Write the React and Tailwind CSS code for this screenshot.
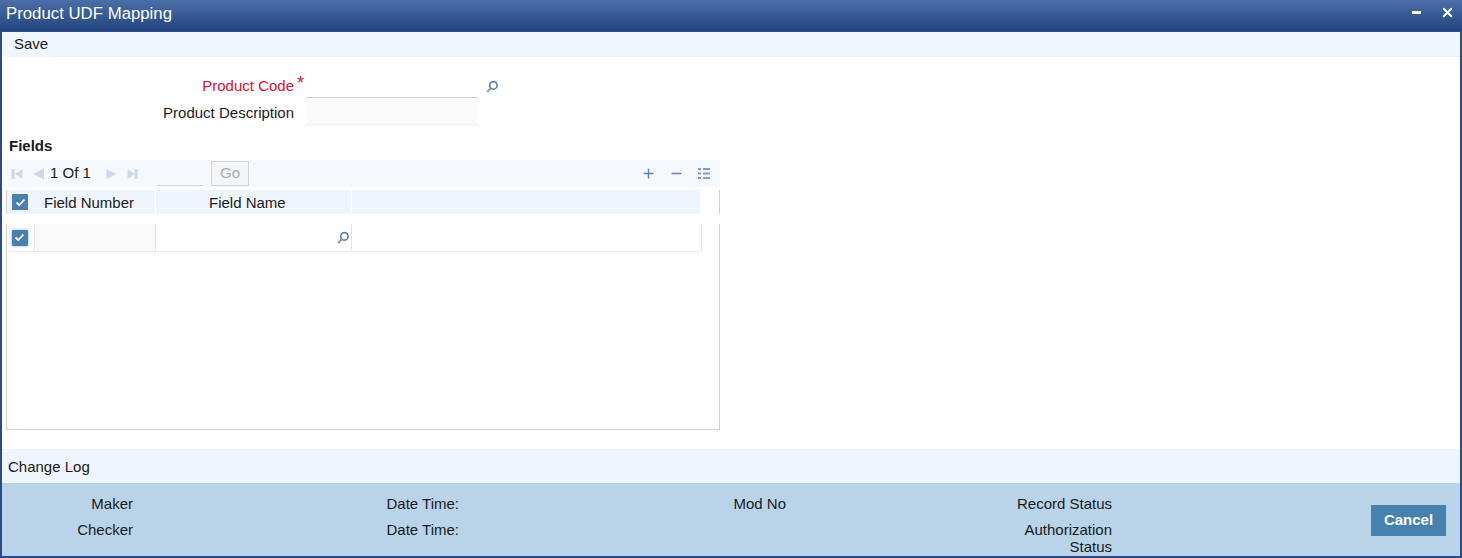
import { Plus, Minus, X } from "lucide-react";

function SearchIcon({ className = "" }) {
  return (
    <svg width="14" height="14" viewBox="0 0 14 14" fill="none" className={className}>
      <circle cx="8.4" cy="5.4" r="3.7" stroke="#5b80b2" strokeWidth="1.7" />
      <path d="M5.8 8.2 L2.2 12" stroke="#7f9cc4" strokeWidth="2" />
    </svg>
  );
}

function Check({ glow }) {
  return (
    <span className={`flex h-[16px] w-[16px] items-center justify-center rounded-[1px] bg-[#4a80b0] ${glow ? "shadow-[0_0_3px_#7ea6cc]" : ""}`}>
      <svg width="11" height="9" viewBox="0 0 11 9" fill="none">
        <path d="M1.5 4.5 L4.2 7 L9.5 1.5" stroke="#ffffff" strokeWidth="1.8" />
      </svg>
    </span>
  );
}

function PagerIcon({ d, bar }) {
  return (
    <svg width="12" height="14" viewBox="0 0 12 14" fill="#ccd9ea">
      <path d={d} />
      {bar && <rect x={bar} y="2" width="3" height="10" />}
    </svg>
  );
}

function FooterCol({ width, rows }) {
  return (
    <div className={`flex shrink-0 flex-col gap-[9px] text-right ${width}`}>
      {rows.map((r, i) => (
        <div key={i} className="leading-[17px]">{r}</div>
      ))}
    </div>
  );
}

export default function App() {
  return (
    <div className="flex h-[558px] w-full flex-col border-x-2 border-b-2 border-[#2b4c86] bg-white font-['Liberation_Sans',Arial,sans-serif] text-[15px] text-[#1a1a1a]">
      <header className="-mx-[2px] flex h-[32px] shrink-0 items-center justify-between border-b border-[#2b4c80] bg-gradient-to-b from-[#4a6fa8] to-[#24457f] pl-[6px] pr-[7px] text-[16.8px] text-white">
        <span className="pb-[3px]">Product UDF Mapping</span>
        <div className="flex items-center gap-[19px] pb-[6px]">
          <span className="h-[3px] w-[9px] bg-white" />
          <X size={15} strokeWidth={3} className="text-white" />
        </div>
      </header>

      <div className="flex h-[25px] shrink-0 border-b border-[#e8eef5] bg-[#f0f6fe]">
        <div className="flex h-[25px] w-[51px] items-center bg-[#f0f6fe] pl-[12px]">Save</div>
      </div>

      <div className="flex flex-col pt-[13px]">
        <div className="flex h-[28px] items-center">
          <label className="w-[292px] pt-[5px] text-right text-[#d8112f]">Product Code</label>
          <span className="ml-[3px] w-[9px] self-start pt-[3px] text-[18px] leading-[20px] text-[#d8112f]">*</span>
          <div className="h-[27px] w-[172px] border-b border-[#cfcfcf]" />
          <SearchIcon className="ml-[7px] mt-[6px]" />
        </div>
        <div className="flex h-[27px] items-center">
          <label className="w-[292px] pt-[3px] text-right">Product Description</label>
          <div className="ml-[12px] h-[27px] w-[172px] border-b border-[#efefef] bg-[#fafafa]" />
        </div>
      </div>

      <div className="ml-[7px] mt-[12px] font-bold leading-[17px]">Fields</div>

      <section className="ml-[4px] mt-[6px] flex w-[714px] flex-col">
        <div className="flex h-[27px] items-center bg-[#f5f9fe] pl-[5px] pr-[9px]">
          <PagerIcon d="M11.5 2 L4 7 L11.5 12 Z" bar="0.5" />
          <span className="ml-[9px]"><PagerIcon d="M12 1.5 L1 7 L12 12.5 Z" /></span>
          <span className="ml-[6px] w-[42px]">1 Of 1</span>
          <span className="ml-[14px]"><PagerIcon d="M0.5 2 L10.5 7 L0.5 12 Z" /></span>
          <span className="ml-[9px]"><PagerIcon d="M0.5 2 L8 7 L0.5 12 Z" bar="7.5" /></span>
          <div className="ml-[18px] h-[26px] w-[46px] self-start border-b border-[#d5d5d5]" />
          <button className="ml-[8px] h-[25px] w-[38px] border border-[#cfd4d8] bg-[#f3f5f7] text-[#a8adb2]">Go</button>
          <div className="ml-auto flex items-center gap-[13px] text-[#5f82b4]">
            <Plus size={15} strokeWidth={2.4} />
            <Minus size={15} strokeWidth={2.4} />
            <svg width="14" height="13" viewBox="0 0 14 13" fill="#7f9cc4">
              <rect x="1" y="1" width="3" height="2" />
              <rect x="6" y="1" width="7" height="2" />
              <rect x="1" y="5.5" width="3" height="2" />
              <rect x="6" y="5.5" width="7" height="2" />
              <rect x="1" y="10" width="3" height="2" />
              <rect x="6" y="10" width="7" height="2" />
            </svg>
          </div>
        </div>

        <div className="mt-[3px] flex h-[24px] items-center border-x border-[#cfcfcf]">
          <div className="flex h-[24px] w-[693px] items-center bg-[#eff5fd]">
            <div className="flex w-[26px] shrink-0 justify-center"><Check /></div>
            <div className="w-[123px] shrink-0 border-r border-white pl-[11px] pt-[2px]">Field Number</div>
            <div className="w-[196px] shrink-0 border-r border-white pl-[53px] pt-[2px]">Field Name</div>
          </div>
        </div>

        <div className="mt-[10px] h-[206px] border-x border-b border-[#cfcfcf]">
          <div className="flex h-[28px] w-[695px] border-b border-[#e9edf2]">
            <div className="flex w-[28px] shrink-0 items-center justify-center border-r border-[#e4e8ec] pr-[2px]"><Check glow /></div>
            <div className="w-[121px] shrink-0 border-r border-[#dfe3e8] bg-[#fbfafa]" />
            <div className="flex w-[196px] shrink-0 items-center justify-end border-r border-[#dfe3e8] pr-[1px]"><SearchIcon /></div>
            <div className="flex-1 border-r border-[#dfe3e8]" />
          </div>
        </div>
      </section>

      <div className="mt-[19px] flex h-[34px] shrink-0 items-center bg-[#eff5fd] pl-[6px] pt-[2px]">Change Log</div>

      <footer className="flex min-h-0 flex-1 bg-[#b9d4e9] pt-[12px]">
        <FooterCol width="w-[131px]" rows={["Maker", "Checker"]} />
        <FooterCol width="w-[326px]" rows={["Date Time:", "Date Time:"]} />
        <FooterCol width="w-[327px]" rows={["Mod No"]} />
        <FooterCol
          width="w-[326px]"
          rows={[
            "Record Status",
            <>
              Authorization
              <br />
              Status
            </>,
          ]}
        />
        <div className="flex-1" />
        <button className="mr-[14px] mt-[10px] h-[31px] w-[75px] self-start bg-[#4682b0] font-bold text-white">Cancel</button>
      </footer>
    </div>
  );
}
